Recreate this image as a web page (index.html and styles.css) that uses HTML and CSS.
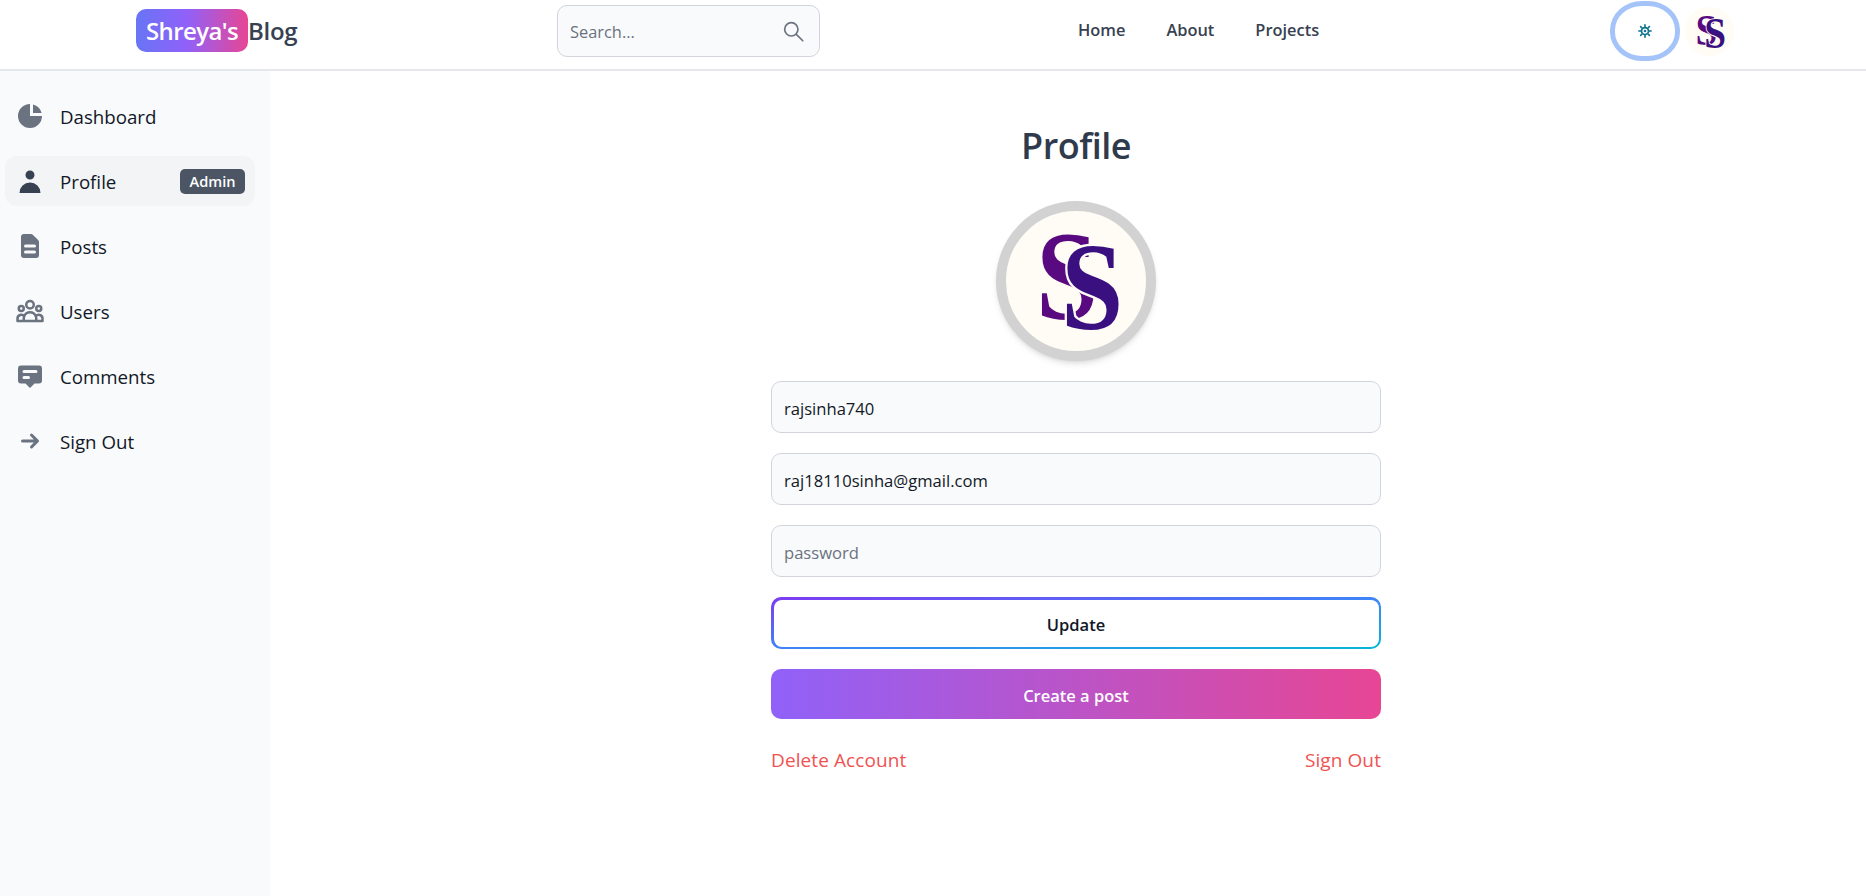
FILE: index.html
```html
<!DOCTYPE html>
<html lang="en">
<head>
<meta charset="utf-8">
<title>Shreya's Blog - Profile</title>
<link rel="stylesheet" href="styles.css">
</head>
<body>
<header class="topbar">
  <a class="brand"><span class="brand-chip">Shreya's</span><span class="brand-rest">Blog</span></a>
  <form class="search">
    <input class="search-input" type="text" placeholder="Search...">
    <svg class="search-icon" viewBox="0 0 24 24" fill="none" stroke="currentColor" stroke-width="1.9" stroke-linecap="round"><circle cx="9.5" cy="9.5" r="7.6"/><path d="M15.2 15.2 22.6 22.6"/></svg>
  </form>
  <nav class="topnav"><a>Home</a><a>About</a><a>Projects</a></nav>
  <div class="actions">
    <button class="theme-btn" type="button">
      <svg class="sun" viewBox="0 0 24 24" fill="currentColor" stroke="currentColor"><circle cx="12" cy="12" r="6" fill="none" stroke-width="3"/><circle cx="12" cy="12" r="2.2" stroke="none"/><g stroke-width="2.8" stroke-linecap="round"><path d="M12 1.5v3M12 19.5v3M1.5 12h3M19.500 12h3M4.500 4.500l2 2M17.500 17.500l2 2M4.500 19.500l2-2M17.500 6.500l2-2"/></g></svg>
    </button>
    <span class="avatar-small">
      <svg class="monogram" viewBox="0 0 140 140"><text class="s-back" transform="translate(30 108) scale(1.12 1.28)">S</text><text class="s-front" transform="translate(55 118) scale(1.12 1.24)">S</text></svg>
    </span>
  </div>
</header>
<div class="shell">
  <aside class="sidebar">
    <a class="side-item">
      <svg class="side-icon" viewBox="0 0 20 20" fill="currentColor"><path d="M2 10a8 8 0 018-8v8h8a8 8 0 11-16 0z"/><path d="M12 2.252A8.014 8.014 0 0117.748 8H12V2.252z"/></svg>
      <span class="side-label">Dashboard</span>
    </a>
    <a class="side-item is-active">
      <svg class="side-icon" viewBox="0 0 20 20" fill="currentColor"><path d="M10 9a3 3 0 100-6 3 3 0 000 6zm-7 9a7 7 0 1114 0H3z"/></svg>
      <span class="side-label">Profile</span>
      <span class="badge">Admin</span>
    </a>
    <a class="side-item">
      <svg class="side-icon" viewBox="0 0 20 20" fill="currentColor"><path fill-rule="evenodd" d="M4 4a2 2 0 012-2h4.586A2 2 0 0112 2.586L15.414 6A2 2 0 0116 7.414V16a2 2 0 01-2 2H6a2 2 0 01-2-2V4zm2 6a1 1 0 011-1h6a1 1 0 110 2H7a1 1 0 01-1-1zm1 3a1 1 0 100 2h6a1 1 0 100-2H7z"/></svg>
      <span class="side-label">Posts</span>
    </a>
    <a class="side-item">
      <svg class="side-icon" viewBox="0 0 24 24" fill="none" stroke="currentColor" stroke-width="2" stroke-linecap="round" stroke-linejoin="round"><path d="M17 20h5v-2a3 3 0 00-5.356-1.857M17 20H7m10 0v-2c0-.656-.126-1.283-.356-1.857M7 20H2v-2a3 3 0 015.356-1.857M7 20v-2c0-.656.126-1.283.356-1.857m0 0a5.002 5.002 0 019.288 0M15 7a3 3 0 11-6 0 3 3 0 016 0zm6 3a2 2 0 11-4 0 2 2 0 014 0zM7 10a2 2 0 11-4 0 2 2 0 014 0z"/></svg>
      <span class="side-label">Users</span>
    </a>
    <a class="side-item">
      <svg class="side-icon" viewBox="0 0 20 20" fill="currentColor"><path fill-rule="evenodd" d="M18 13V5a2 2 0 00-2-2H4a2 2 0 00-2 2v8a2 2 0 002 2h3l3 3 3-3h3a2 2 0 002-2zM5 7a1 1 0 011-1h8a1 1 0 110 2H6a1 1 0 01-1-1zm1 3a1 1 0 100 2h3a1 1 0 100-2H6z"/></svg>
      <span class="side-label">Comments</span>
    </a>
    <a class="side-item">
      <svg class="side-icon" viewBox="0 0 20 20" fill="currentColor"><path fill-rule="evenodd" d="M10.293 5.293a1 1 0 011.414 0l4 4a1 1 0 010 1.414l-4 4a1 1 0 01-1.414-1.414L12.586 11H5a1 1 0 110-2h7.586l-2.293-2.293a1 1 0 010-1.414z"/></svg>
      <span class="side-label">Sign Out</span>
    </a>
  </aside>
  <main class="main">
    <div class="profile">
      <h1 class="profile-title">Profile</h1>
      <div class="avatar-large">
        <svg class="monogram" viewBox="0 0 140 140"><text class="s-back" transform="translate(30 108) scale(1.12 1.28)">S</text><text class="s-front" transform="translate(55 118) scale(1.12 1.24)">S</text></svg>
      </div>
      <form class="profile-form">
        <input class="field" type="text" value="rajsinha740">
        <input class="field" type="email" value="raj18110sinha@gmail.com">
        <input class="field" type="password" placeholder="password">
        <button class="btn-outline" type="button"><span class="btn-outline-inner">Update</span></button>
        <button class="btn-solid" type="button">Create a post</button>
      </form>
      <div class="danger-links"><a>Delete Account</a><a>Sign Out</a></div>
    </div>
  </main>
</div>
</body>
</html>
```
FILE: styles.css
```css
* { box-sizing: border-box; }
html, body { margin: 0; height: 100%; }
body {
  font-family: "Open Sans", "Noto Sans", sans-serif;
  color: #111827;
  background: #fff;
  overflow: hidden;
}
.topbar {
  height: 71px;
  display: flex;
  align-items: flex-start;
  gap: 258px;
  padding-left: 136px;
  border-bottom: 2px solid #e5e7eb;
  background: #fff;
}
.brand {
  display: flex;
  align-items: center;
  width: 163px;
  margin-top: 9px;
  font-size: 24px;
  font-weight: 600;
  letter-spacing: -0.6px;
}
.brand-chip {
  width: 112px;
  height: 43px;
  display: flex;
  align-items: center;
  justify-content: center;
  border-radius: 10px;
  color: #fff;
  background: linear-gradient(to right, #6875f5, #9061f9 45%, #e74694);
}
.brand-rest { color: #374151; letter-spacing: -0.3px; }
.search {
  position: relative;
  width: 263px;
  margin-top: 5px;
}
.search-input {
  width: 100%;
  height: 52px;
  padding: 0 50px 0 12px;
  border: 1px solid #d1d5db;
  border-radius: 10px;
  background: #f9fafb;
  font: 16.4px "Open Sans", sans-serif;
  letter-spacing: 0;
  outline: none;
}
.search-input::placeholder { color: #6b7280; opacity: 1; }
.search-icon {
  position: absolute;
  right: 16px;
  top: 16px;
  width: 21px;
  height: 21px;
  color: #6b7280;
}
.topnav {
  display: flex;
  gap: 41px;
  margin-top: 18px;
  font-size: 16.4px;
  font-weight: 600;
  letter-spacing: 0;
  color: #374151;
}
.actions {
  display: flex;
  align-items: center;
  gap: 5px;
  margin-left: 33px;
  margin-top: 1px;
}
.theme-btn {
  width: 70px;
  height: 60px;
  padding: 0;
  display: flex;
  align-items: center;
  justify-content: center;
  background: #fff;
  border: 5px solid #a4c3f9;
  border-radius: 32px / 29px;
  color: #0e7490;
}
.sun { width: 14px; height: 14px; }
.avatar-small {
  width: 49px;
  height: 49px;
  border-radius: 50%;
  background: #fffcf5;
}
.monogram { display: block; width: 100%; height: 100%; overflow: visible; }
.s-back, .s-front {
  font-family: "Liberation Serif", serif;
  font-weight: 700;
  font-size: 100px;
}
.s-back { fill: #5a0a80; }
.s-front {
  fill: #3a0f80;
  stroke: #fffcf5;
  stroke-width: 4px;
  paint-order: stroke;
}
.shell {
  display: flex;
  height: 825px;
}
.sidebar {
  width: 270px;
  flex: none;
  display: flex;
  flex-direction: column;
  gap: 15px;
  padding: 20px 15px 0 5px;
  background: #f9fafb;
}
.side-item {
  height: 50px;
  display: flex;
  align-items: center;
  gap: 15px;
  padding: 0 10px;
  border-radius: 12px;
}
.side-label {
  padding-top: 1px;
  font-size: 18.7px;
}
.side-icon { flex: none; width: 30px; height: 30px; color: #6b7280; }
.is-active { background: #f3f4f6; }
.is-active .side-icon { color: #374151; }
.badge {
  margin-left: auto;
  width: 65px;
  height: 25px;
  display: flex;
  align-items: center;
  justify-content: center;
  border-radius: 5px;
  background: #4b5563;
  color: #fff;
  font-size: 14.6px;
  font-weight: 600;
}
.main {
  flex: 1;
  padding: 50px 0 0 16px;
}
.profile {
  width: 610px;
  margin: 0 auto;
}
.profile-title {
  margin: 0 0 30px;
  height: 50px;
  line-height: 50px;
  text-align: center;
  font-size: 36px;
  font-weight: 600;
  letter-spacing: -0.5px;
  color: #2f3b4c;
}
.avatar-large {
  width: 160px;
  height: 160px;
  margin: 0 auto 20px;
  border: 10px solid #d2d2d2;
  border-radius: 50%;
  background: #fffcf5;
  box-shadow: 0 4px 6px -1px rgba(0,0,0,.1), 0 2px 4px -2px rgba(0,0,0,.1);
}
.profile-form {
  display: flex;
  flex-direction: column;
  gap: 20px;
}
.field {
  height: 52px;
  padding: 2px 12px 0;
  border: 1px solid #d1d5db;
  border-radius: 10px;
  background: #f9fafb;
  color: #111827;
  font: 16.6px "Open Sans", sans-serif;
  outline: none;
}
.field::placeholder { color: #6b7280; opacity: 1; }
.btn-outline {
  height: 52px;
  padding: 2.5px;
  border: 0;
  border-radius: 10px;
  background: linear-gradient(to bottom right, #7e3af2, #3f83f8 50%, #06b6d4);
}
.btn-outline-inner {
  display: flex;
  height: 100%;
  padding-top: 2px;
  align-items: center;
  justify-content: center;
  border-radius: 8px;
  background: #fff;
  color: #111827;
  font: 600 16.5px "Open Sans", sans-serif;
}
.btn-solid {
  height: 50px;
  padding-top: 3px;
  border: 0;
  border-radius: 10px;
  background: linear-gradient(to right, #9061f9, #e74694);
  color: #fff;
  font: 600 16.5px "Open Sans", sans-serif;
}
.danger-links {
  display: flex;
  justify-content: space-between;
  margin-top: 28px;
  font-size: 19px;
  letter-spacing: 0.1px;
  color: #f05252;
}
```
